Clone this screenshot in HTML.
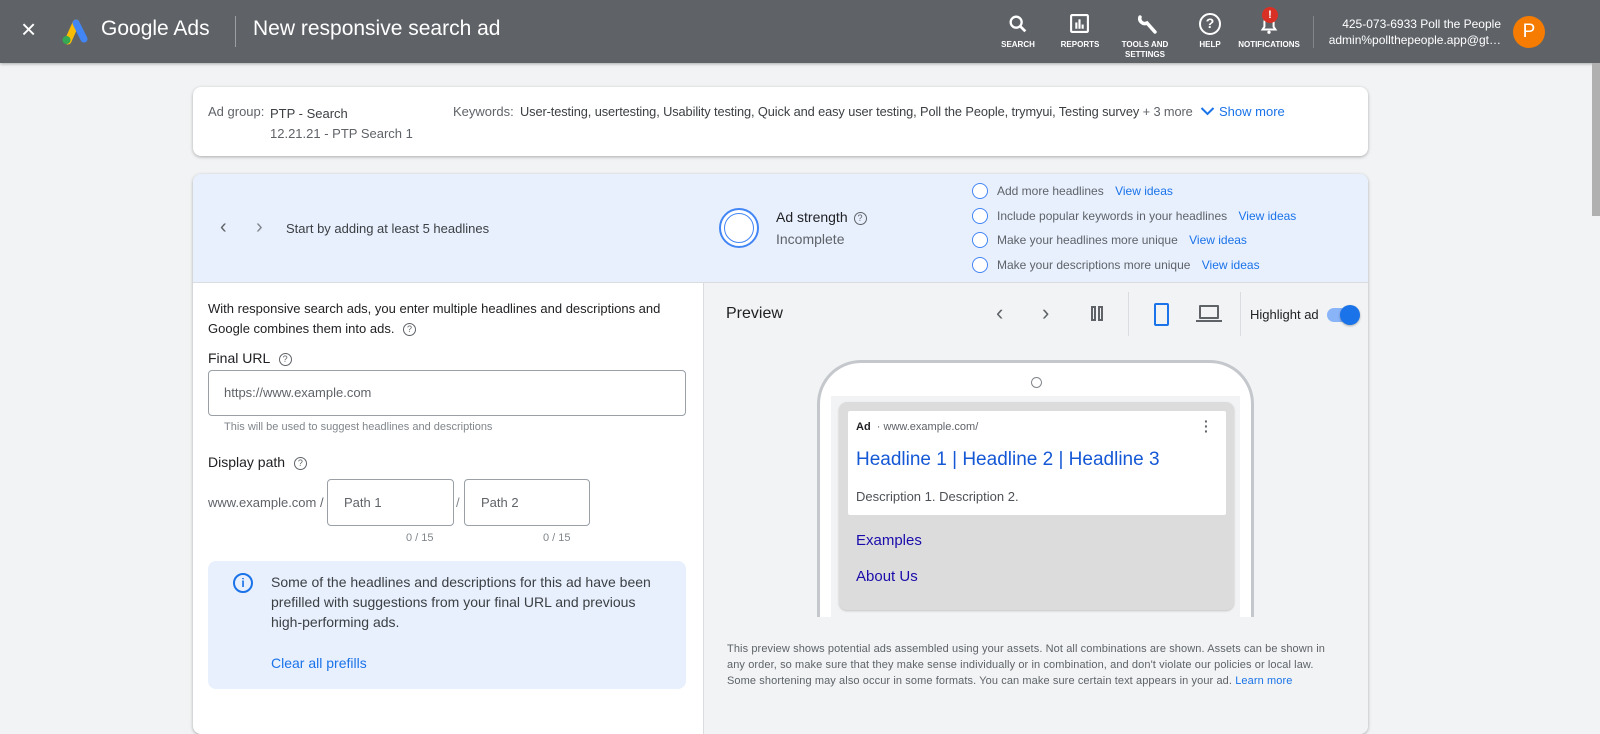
<!DOCTYPE html>
<html><head><meta charset="utf-8"><style>
*{box-sizing:border-box;margin:0;padding:0}
body{width:1600px;height:712px;overflow:hidden;background:#f1f3f4;font-family:"Liberation Sans",Arial,sans-serif;color:#3c4043;position:relative}
.a{position:absolute}
.top{left:0;top:0;width:1600px;height:63px;background:#5f6368;box-shadow:0 1px 3px rgba(0,0,0,.3)}
.w{color:#fff}
.navi{text-align:center;font-size:8px;font-weight:bold;color:#fff;line-height:10px}
.card{background:#fff;border-radius:8px;box-shadow:0 1px 3px rgba(0,0,0,.3)}
.f13{font-size:13px}
.blue{color:#1a73e8}
.circ{width:16px;height:16px;border:1.5px solid #4285f4;border-radius:50%;background:#fff}
.q{display:inline-block;width:13px;height:13px;border:1.3px solid #5f6368;border-radius:50%;font-size:9px;text-align:center;line-height:11px;color:#5f6368;vertical-align:middle;margin-left:5px}
.inp{border:1px solid #9aa0a6;border-radius:4px;background:#fff;color:#5f6368;font-size:13px}
</style></head><body>
<div class="a top">
 <div class="a w" style="left:21px;top:14px;font-size:26px;line-height:30px">×</div>
 <svg class="a" style="left:58px;top:17px" width="32" height="28" viewBox="0 0 32 28"><path d="M10 24 L18 6" stroke="#fbbc04" stroke-width="7" stroke-linecap="round"/><path d="M18 6 L26 22" stroke="#4285f4" stroke-width="7" stroke-linecap="round"/><circle cx="8.5" cy="23" r="4" fill="#34a853"/></svg>
 <div class="a w" style="left:101px;top:17px;font-size:21px">Google Ads</div>
 <div class="a" style="left:235px;top:16px;width:1px;height:31px;background:#9aa0a6"></div>
 <div class="a w" style="left:253px;top:17px;font-size:21px">New responsive search ad</div>
 <svg class="a" style="left:1007px;top:13px" width="22" height="22" viewBox="0 0 24 24"><circle cx="10" cy="10" r="6" stroke="#fff" stroke-width="2.5" fill="none"/><path d="M14.5 14.5 L20 20" stroke="#fff" stroke-width="3"/></svg>
 <div class="a navi" style="left:995px;top:40px;width:46px">SEARCH</div>
 <svg class="a" style="left:1069px;top:13px" width="21" height="21" viewBox="0 0 20 20"><rect x="2" y="2" width="16" height="16" rx="1" stroke="#fff" stroke-width="2" fill="none"/><rect x="6" y="9" width="2" height="6" fill="#fff"/><rect x="9" y="6" width="2" height="9" fill="#fff"/><rect x="12" y="11" width="2" height="4" fill="#fff"/></svg>
 <div class="a navi" style="left:1055px;top:40px;width:50px">REPORTS</div>
 <svg class="a" style="left:1136px;top:12px" width="24" height="24" viewBox="0 0 24 24"><path d="M4 5 a5 5 0 0 0 7 6 L19 20" stroke="#fff" stroke-width="3.5" fill="none" stroke-linecap="round"/></svg>
 <div class="a navi" style="left:1115px;top:40px;width:60px">TOOLS AND<br>SETTINGS</div>
 <div class="a" style="left:1199px;top:13px;width:22px;height:22px;border:2.5px solid #fff;border-radius:50%;color:#fff;font-weight:bold;font-size:14px;text-align:center;line-height:17px">?</div>
 <div class="a navi" style="left:1190px;top:40px;width:40px">HELP</div>
 <svg class="a" style="left:1258px;top:13px" width="22" height="22" viewBox="0 0 24 24"><path d="M5 18 h14 l-2-3 v-5 a5 5 0 0 0 -10 0 v5 z" stroke="#fff" stroke-width="2.2" fill="none"/><circle cx="12" cy="21" r="1.8" fill="#fff"/></svg>
 <div class="a" style="left:1262px;top:7px;width:16px;height:16px;border-radius:50%;background:#d93025;color:#fff;font-weight:bold;font-size:11px;text-align:center;line-height:16px">!</div>
 <div class="a navi" style="left:1236px;top:40px;width:66px">NOTIFICATIONS</div>
 <div class="a" style="left:1313px;top:16px;width:1px;height:32px;background:#80868b"></div>
 <div class="a w" style="left:1324px;top:16px;width:177px;text-align:right;font-size:12px;line-height:16px">425-073-6933 Poll the People<br>admin%pollthepeople.app@gt…</div>
 <div class="a" style="left:1513px;top:16px;width:32px;height:32px;border-radius:50%;background:#f57c00;color:#fff;font-size:19px;text-align:center;line-height:32px">P</div>
</div>
<div class="a" style="left:1592px;top:63px;width:8px;height:153px;background:#b0b0b0"></div>

<div class="a card" style="left:193px;top:87px;width:1175px;height:69px">
 <div class="a f13" style="left:15px;top:17px;color:#5f6368">Ad group:</div>
 <div class="a f13" style="left:77px;top:17px;line-height:20px;color:#3c4043">PTP - Search<br><span style="color:#5f6368">12.21.21 - PTP Search 1</span></div>
 <div class="a f13" style="left:260px;top:17px;color:#5f6368">Keywords:</div>
 <div class="a" style="left:327px;top:17px;font-size:12.8px;letter-spacing:-0.1px;color:#3c4043;white-space:nowrap">User-testing, usertesting, Usability testing, Quick and easy user testing, Poll the People, trymyui, Testing survey <span style="color:#5f6368">+ 3 more</span></div>
 <div class="a blue f13" style="left:1026px;top:17px">Show more</div>
</div>
<svg class="a" style="left:1200px;top:105px" width="15" height="12" viewBox="0 0 15 12"><path d="M1.5 3 L7.5 9 L13.5 3" stroke="#1a73e8" stroke-width="2" fill="none"/></svg>

<div class="a card" style="left:193px;top:174px;width:1175px;height:560px;overflow:hidden">
 <div class="a" style="left:0;top:0;width:1175px;height:109px;background:#e8f0fe;border-bottom:1px solid #dadce0"></div>
 <div class="a" style="left:27px;top:42px;font-size:20px;color:#5f6368">‹</div>
 <div class="a" style="left:63px;top:42px;font-size:20px;color:#80868b">›</div>
 <div class="a f13" style="left:93px;top:47px;color:#3c4043">Start by adding at least 5 headlines</div>
 <div class="a" style="left:526px;top:34px;width:40px;height:40px;border:2px solid #4285f4;border-radius:50%;background:#fff"><div style="margin:3px;width:30px;height:30px;border:1.5px solid #4285f4;border-radius:50%"></div></div>
 <div class="a" style="left:583px;top:35px;font-size:14px;color:#202124">Ad strength <span class="q" style="margin-left:2px">?</span></div>
 <div class="a" style="left:583px;top:57px;font-size:14px;color:#5f6368">Incomplete</div>
 <div class="a circ" style="left:779px;top:9px"></div><div class="a" style="left:804px;top:10px;font-size:12px;color:#5f6368">Add more headlines <span class="blue" style="margin-left:8px">View ideas</span></div>
 <div class="a circ" style="left:779px;top:34px"></div><div class="a" style="left:804px;top:35px;font-size:12px;color:#5f6368">Include popular keywords in your headlines <span class="blue" style="margin-left:8px">View ideas</span></div>
 <div class="a circ" style="left:779px;top:58px"></div><div class="a" style="left:804px;top:59px;font-size:12px;color:#5f6368">Make your headlines more unique <span class="blue" style="margin-left:8px">View ideas</span></div>
 <div class="a circ" style="left:779px;top:83px"></div><div class="a" style="left:804px;top:84px;font-size:12px;color:#5f6368">Make your descriptions more unique <span class="blue" style="margin-left:8px">View ideas</span></div>

 <div class="a f13" style="left:15px;top:125px;line-height:20px;color:#202124">With responsive search ads, you enter multiple headlines and descriptions and<br>Google combines them into ads. <span class="q">?</span></div>
 <div class="a" style="left:15px;top:176px;font-size:14px;color:#202124">Final URL <span class="q">?</span></div>
 <div class="a inp" style="left:15px;top:196px;width:478px;height:46px;padding:14px 15px">https://www.example.com</div>
 <div class="a" style="left:31px;top:247px;font-size:11px;color:#80868b">This will be used to suggest headlines and descriptions</div>
 <div class="a" style="left:15px;top:280px;font-size:14px;color:#202124">Display path <span class="q">?</span></div>
 <div class="a f13" style="left:15px;top:321px;color:#5f6368">www.example.com /</div>
 <div class="a inp" style="left:134px;top:305px;width:127px;height:47px;padding:15px 16px">Path 1</div>
 <div class="a f13" style="left:263px;top:321px;color:#80868b">/</div>
 <div class="a inp" style="left:271px;top:305px;width:126px;height:47px;padding:15px 16px">Path 2</div>
 <div class="a" style="left:213px;top:358px;font-size:11px;color:#80868b">0 / 15</div>
 <div class="a" style="left:350px;top:358px;font-size:11px;color:#80868b">0 / 15</div>
 <div class="a" style="left:15px;top:387px;width:478px;height:128px;background:#e8f0fe;border-radius:8px">
  <div class="a" style="left:25px;top:12px;width:20px;height:20px;border:2px solid #1a73e8;border-radius:50%;color:#1a73e8;font-weight:bold;font-size:12px;text-align:center;line-height:16px">i</div>
  <div class="a" style="left:63px;top:11px;font-size:14px;line-height:20px;color:#3c4043;width:385px">Some of the headlines and descriptions for this ad have been prefilled with suggestions from your final URL and previous high-performing ads.</div>
  <div class="a blue" style="left:63px;top:94px;font-size:14px">Clear all prefills</div>
 </div>

 <div class="a" style="left:510px;top:109px;width:665px;height:460px;background:#f1f3f4;border-left:1px solid #dadce0">
  <div class="a" style="left:22px;top:22px;font-size:16px;color:#202124">Preview</div>
  <div class="a" style="left:292px;top:17px;font-size:22px;color:#5f6368">‹</div>
  <div class="a" style="left:338px;top:17px;font-size:22px;color:#5f6368">›</div>
  <div class="a" style="left:387px;top:23px;width:5px;height:15px;border:2px solid #5f6368"></div><div class="a" style="left:394px;top:23px;width:5px;height:15px;border:2px solid #5f6368"></div>
  <div class="a" style="left:424px;top:9px;width:1px;height:44px;background:#dadce0"></div>
  <div class="a" style="left:450px;top:20px;width:15px;height:23px;border:2px solid #1a73e8;border-radius:2px"></div>
  <div class="a" style="left:495px;top:22px;width:20px;height:14px;border:2px solid #5f6368;border-radius:1px"></div><div class="a" style="left:492px;top:37px;width:26px;height:2px;background:#5f6368"></div>
  <div class="a" style="left:536px;top:9px;width:1px;height:44px;background:#dadce0"></div>
  <div class="a f13" style="left:546px;top:24px;color:#202124">Highlight ad</div>
  <div class="a" style="left:623px;top:25px;width:30px;height:14px;border-radius:7px;background:#8ab4f8"></div>
  <div class="a" style="left:636px;top:22px;width:20px;height:20px;border-radius:50%;background:#1a73e8;box-shadow:0 1px 2px rgba(0,0,0,.3)"></div>
  <div class="a" style="left:113px;top:77px;width:437px;height:257px;border:3px solid #c4c7cb;border-bottom:none;border-radius:44px 44px 0 0;background:#fff"></div>
  <div class="a" style="left:327px;top:94px;width:11px;height:11px;border:1px solid #80868b;border-radius:50%"></div>
  <div class="a" style="left:127px;top:113px;width:409px;height:221px;background:#f1f3f4"></div>
  <div class="a" style="left:135px;top:119px;width:395px;height:208px;background:#dcdcdc;border-radius:8px;box-shadow:0 1px 2px rgba(0,0,0,.2)"></div>
  <div class="a" style="left:144px;top:128px;width:378px;height:104px;background:#fff;border-radius:2px">
   <div class="a" style="left:8px;top:10px;font-size:11px;color:#202124"><b>Ad</b> <span style="color:#5f6368">&nbsp;·&nbsp;www.example.com/</span></div>
   <div class="a" style="left:356px;top:8px;font-size:14px;font-weight:bold;color:#5f6368;line-height:5px">·<br>·<br>·</div>
   <div class="a" style="left:8px;top:38px;font-size:19px;color:#1558d6">Headline 1 | Headline 2 | Headline 3</div>
   <div class="a f13" style="left:8px;top:78px;color:#4d5156">Description 1. Description 2.</div>
  </div>
  <div class="a" style="left:152px;top:249px;font-size:15px;color:#1a0dab">Examples</div>
  <div class="a" style="left:152px;top:285px;font-size:15px;color:#1a0dab">About Us</div>
  <div class="a" style="left:23px;top:358px;width:615px;font-size:11px;letter-spacing:0.1px;line-height:16px;color:#5f6368">This preview shows potential ads assembled using your assets. Not all combinations are shown. Assets can be shown in any order, so make sure that they make sense individually or in combination, and don't violate our policies or local law. Some shortening may also occur in some formats. You can make sure certain text appears in your ad. <span class="blue">Learn more</span></div>
 </div>
</div>
</body></html>
